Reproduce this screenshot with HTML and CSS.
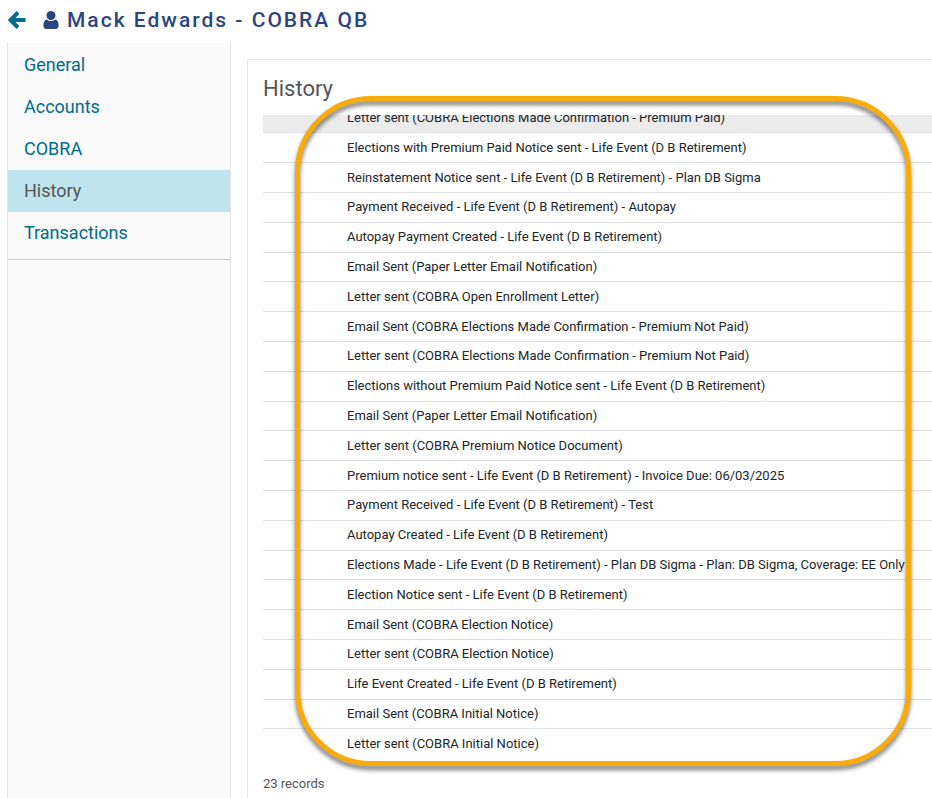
FILE: index.html
```html
<!DOCTYPE html>
<html lang="en">
  <head>
    <meta charset="UTF-8">
    <meta name="viewport" content="width=device-width, initial-scale=1.0">
    <title>Mack Edwards - COBRA QB</title>
    <link rel="stylesheet" href="styles.css">
  </head>
  <body>
    <header class="page-header">
      <a href="#" class="back-link" aria-label="Back">
        <svg width="18" height="18" viewBox="0 0 18 18"><path d="M10 1.500 2.500 9l7.500 7.500M3 9H17.500" fill="none" stroke="currentColor" stroke-width="4"/></svg>
      </a>
      <svg class="user-icon" width="16" height="18" viewBox="0 0 16 18" aria-hidden="true">
        <circle cx="8" cy="4.500" r="4.500"/>
        <path d="M4 8.500C5 9.500 6.500 10 8 10s3-.5 4-1.500c2.500.3 3.600 2.500 3.600 6 0 2-1 3.500-2.800 3.500H3.200C1.400 18 .4 16.500.4 14.500c0-3.500 1.100-5.700 3.600-6z"/>
      </svg>
      <h1>Mack Edwards - COBRA QB</h1>
    </header>
    <div class="layout">
      <nav class="sidebar">
        <ul class="nav-list">
          <li><a href="#">General</a></li>
          <li><a href="#">Accounts</a></li>
          <li><a href="#">COBRA</a></li>
          <li><a href="#" class="active" aria-current="page">History</a></li>
          <li><a href="#">Transactions</a></li>
        </ul>
      </nav>
      <main class="panel">
        <h2>History</h2>
        <div class="table-wrap">
          <table class="history-table">
            <tbody>
              <tr class="highlighted"><td></td><td>Letter sent (COBRA Elections Made Confirmation - Premium Paid)</td></tr>
              <tr><td></td><td>Elections with Premium Paid Notice sent - Life Event (D B Retirement)</td></tr>
              <tr><td></td><td>Reinstatement Notice sent - Life Event (D B Retirement) - Plan DB Sigma</td></tr>
              <tr><td></td><td>Payment Received - Life Event (D B Retirement) - Autopay</td></tr>
              <tr><td></td><td>Autopay Payment Created - Life Event (D B Retirement)</td></tr>
              <tr><td></td><td>Email Sent (Paper Letter Email Notification)</td></tr>
              <tr><td></td><td>Letter sent (COBRA Open Enrollment Letter)</td></tr>
              <tr><td></td><td>Email Sent (COBRA Elections Made Confirmation - Premium Not Paid)</td></tr>
              <tr><td></td><td>Letter sent (COBRA Elections Made Confirmation - Premium Not Paid)</td></tr>
              <tr><td></td><td>Elections without Premium Paid Notice sent - Life Event (D B Retirement)</td></tr>
              <tr><td></td><td>Email Sent (Paper Letter Email Notification)</td></tr>
              <tr><td></td><td>Letter sent (COBRA Premium Notice Document)</td></tr>
              <tr><td></td><td>Premium notice sent - Life Event (D B Retirement) - Invoice Due: 06/03/2025</td></tr>
              <tr><td></td><td>Payment Received - Life Event (D B Retirement) - Test</td></tr>
              <tr><td></td><td>Autopay Created - Life Event (D B Retirement)</td></tr>
              <tr><td></td><td>Elections Made - Life Event (D B Retirement) - Plan DB Sigma - Plan: DB Sigma, Coverage: EE Only</td></tr>
              <tr><td></td><td>Election Notice sent - Life Event (D B Retirement)</td></tr>
              <tr><td></td><td>Email Sent (COBRA Election Notice)</td></tr>
              <tr><td></td><td>Letter sent (COBRA Election Notice)</td></tr>
              <tr><td></td><td>Life Event Created - Life Event (D B Retirement)</td></tr>
              <tr><td></td><td>Email Sent (COBRA Initial Notice)</td></tr>
              <tr><td></td><td>Letter sent (COBRA Initial Notice)</td></tr>
            </tbody>
          </table>
        </div>
        <p class="record-count">23 records</p>
        <div class="callout"></div>
      </main>
    </div>
  </body>
</html>
```

FILE: styles.css
```css
:root {
  --link-color: #006b8a;
  --title-color: #2b4583;
  --text-color: #212529;
  --muted-color: #555555;
  --line-color: #dddfe3;
  --callout-color: #f9ab0c;
}

* {
  box-sizing: border-box;
}

body {
  font-family: Roboto, sans-serif;
  color: var(--text-color);
  background: #ffffff;
  margin: 0;
  height: 100vh;
  display: flex;
  flex-direction: column;
  overflow: hidden;
}

.page-header {
  display: flex;
  align-items: center;
  height: 43px;
  flex-shrink: 0;
  padding: 0 8px 3px;
}

.back-link {
  display: flex;
  color: var(--link-color);
  margin-right: 17px;
}

.user-icon {
  fill: var(--title-color);
  margin-right: 8px;
}

h1 {
  margin: 0;
  font-size: 21px;
  line-height: 24px;
  font-weight: 500;
  letter-spacing: 2px;
  color: var(--title-color);
}

.layout {
  display: flex;
  flex: 1;
  min-height: 0;
  padding-left: 7px;
}

.sidebar {
  width: 224px;
  flex-shrink: 0;
  background: #fafafa;
  border: 1px solid #e4e4e4;
  border-width: 0 1px;
}

.nav-list {
  list-style: none;
  margin: 0;
  padding: 1px 0 5px;
  border-bottom: 1px solid #d0d0d0;
}

.nav-list a {
  display: block;
  padding: 0 16px;
  font-size: 18px;
  line-height: 42px;
  color: var(--link-color);
  text-decoration: none;
}

.nav-list a.active {
  color: var(--muted-color);
  background: #bfe4ee;
}

.panel {
  position: relative;
  flex: 1;
  min-width: 0;
  display: flex;
  flex-direction: column;
  margin: 16px 0 0 16px;
  padding: 16px 0 0 15px;
  border: 1px solid #e8e8e8;
  border-width: 1px 0 0 1px;
}

h2 {
  margin: 0 0 13px;
  font-size: 22px;
  line-height: 26px;
  font-weight: 400;
  color: var(--muted-color);
}

/* rows are pinned to the bottom, the oldest entry stays in view */
.table-wrap {
  flex: 1;
  min-height: 0;
  display: flex;
  flex-direction: column;
  justify-content: flex-end;
  overflow: hidden;
}

.history-table {
  width: 100%;
  height: 654px;
  flex-shrink: 0;
  border-collapse: collapse;
  font-size: 13px;
  line-height: 16px;
}

.history-table td {
  padding: 0;
  border-bottom: 1px solid var(--line-color);
  white-space: nowrap;
}

.history-table td:first-child {
  width: 84px;
}

.history-table tr:last-child td {
  border-bottom: 0;
}

.history-table .highlighted {
  background: #ebebeb;
}

.record-count {
  margin: 0;
  padding: 17px 0 5px;
  font-size: 13px;
  line-height: 18px;
  color: var(--muted-color);
}

.callout {
  position: absolute;
  top: 36px;
  right: 21px;
  bottom: 32px;
  left: 47px;
  border: 5px solid var(--callout-color);
  border-radius: 76px;
  filter: drop-shadow(0 4px 2px rgba(0, 0, 0, 0.5));
  pointer-events: none;
}
```
